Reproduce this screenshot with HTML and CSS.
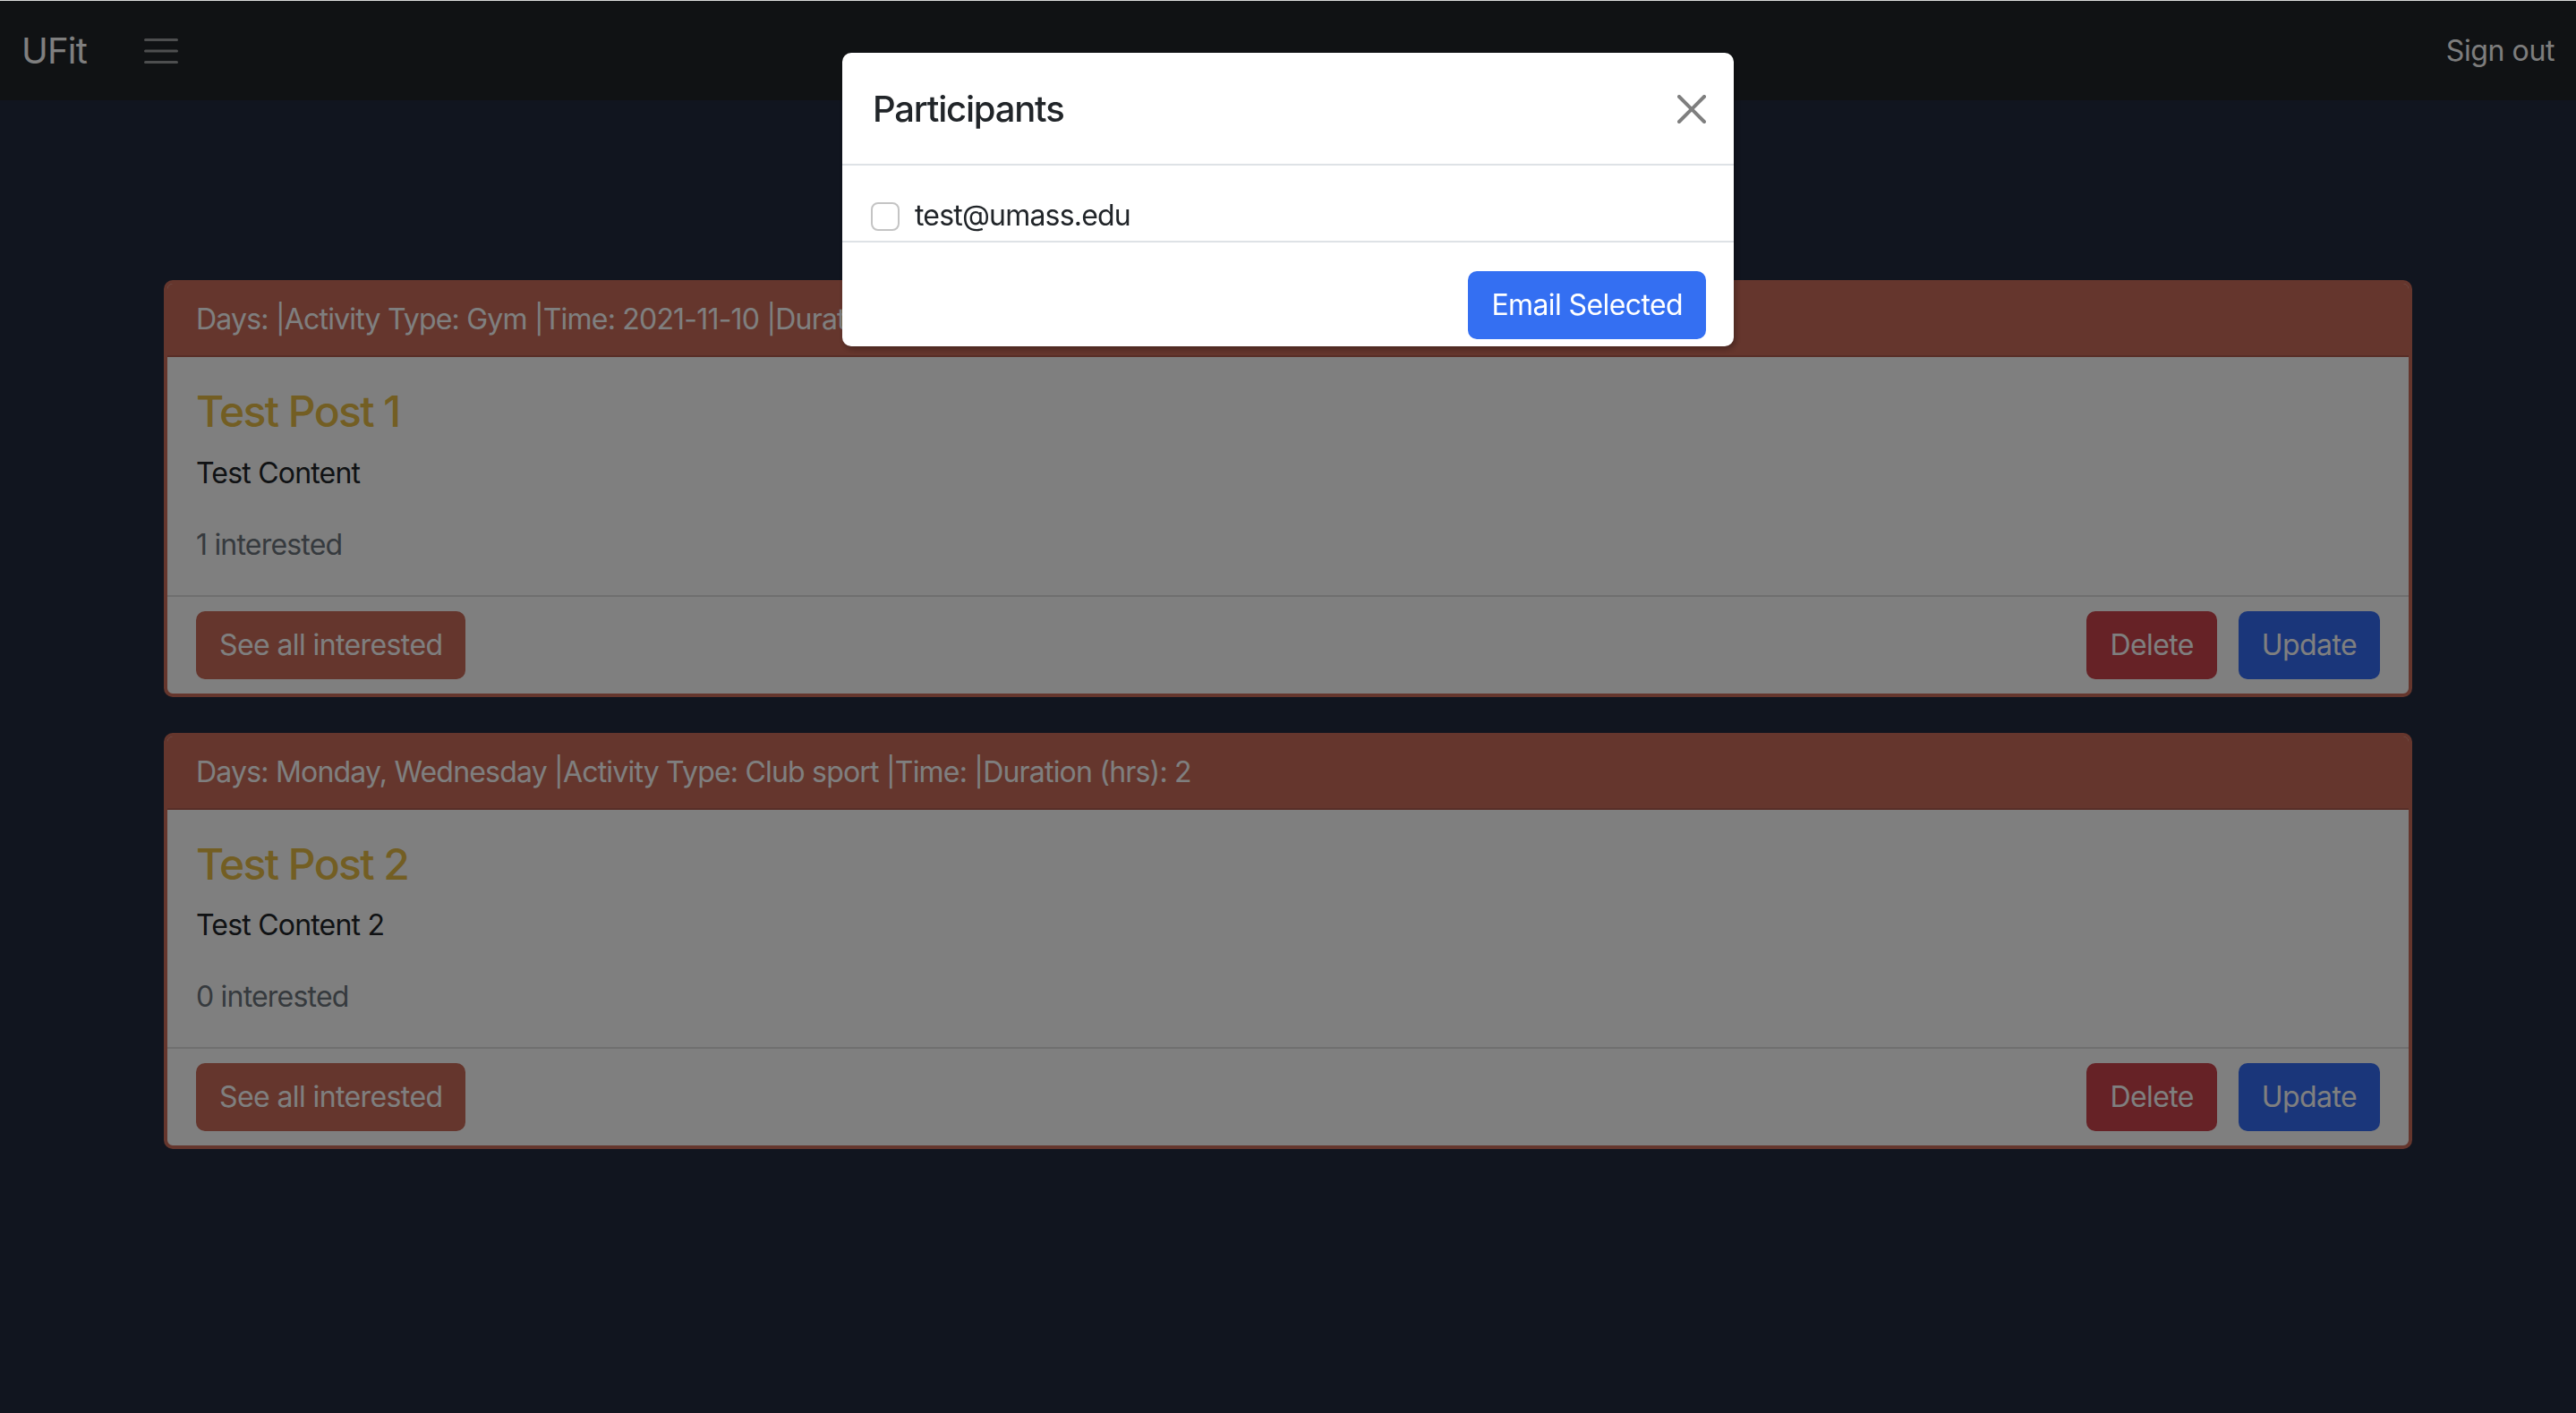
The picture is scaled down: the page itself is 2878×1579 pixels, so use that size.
FILE: index.html
```html
<!DOCTYPE html>
<html lang="en">
<head>
<meta charset="utf-8">
<title>UFit</title>
<link rel="stylesheet" href="styles.css">
</head>
<body>
<nav class="navbar">
  <a class="brand">UFit</a>
  <button class="toggler" aria-label="Toggle navigation">
    <svg width="38" height="28" viewBox="0 0 38 28"><path d="M1.5 1.5h35M1.5 14h35M1.5 26.5h35" stroke="#9a9c9e" stroke-width="3" stroke-linecap="round" fill="none"/></svg>
  </button>
  <a class="signout">Sign out</a>
</nav>

<main class="container">
  <section class="card">
    <div class="card-header">Days: |Activity Type: Gym |Time: 2021-11-10 |Duration (hrs): 1</div>
    <div class="card-body">
      <h4 class="card-title">Test Post 1</h4>
      <p class="card-text">Test Content</p>
      <p class="card-muted">1 interested</p>
    </div>
    <div class="card-footer">
      <button class="btn btn-brown">See all interested</button>
      <div class="btn-group">
        <button class="btn btn-danger">Delete</button>
        <button class="btn btn-primary">Update</button>
      </div>
    </div>
  </section>

  <section class="card">
    <div class="card-header">Days: Monday, Wednesday |Activity Type: Club sport |Time: |Duration (hrs): 2</div>
    <div class="card-body">
      <h4 class="card-title">Test Post 2</h4>
      <p class="card-text">Test Content 2</p>
      <p class="card-muted">0 interested</p>
    </div>
    <div class="card-footer">
      <button class="btn btn-brown">See all interested</button>
      <div class="btn-group">
        <button class="btn btn-danger">Delete</button>
        <button class="btn btn-primary">Update</button>
      </div>
    </div>
  </section>
</main>

<div class="backdrop"></div>

<div class="modal">
  <div class="modal-dialog">
    <div class="modal-header">
      <h5 class="modal-title">Participants</h5>
      <button class="btn-close" aria-label="Close">
        <svg width="32" height="32" viewBox="0 0 16 16"><path fill="#000" fill-opacity="0.5" d="M.293.293a1 1 0 0 1 1.414 0L8 6.586 14.293.293a1 1 0 1 1 1.414 1.414L9.414 8l6.293 6.293a1 1 0 0 1-1.414 1.414L8 9.414l-6.293 6.293a1 1 0 0 1-1.414-1.414L6.586 8 .293 1.707a1 1 0 0 1 0-1.414z"/></svg>
      </button>
    </div>
    <div class="modal-body">
      <label class="check-row">
        <input type="checkbox" class="check">
        <span>test@umass.edu</span>
      </label>
    </div>
    <div class="modal-footer">
      <button class="btn btn-email">Email Selected</button>
    </div>
  </div>
</div>
</body>
</html>
```

FILE: styles.css
```css
* { box-sizing: border-box; }

html, body {
  margin: 0;
  padding: 0;
}

body {
  background: #222a3e;
  font-family: "Inter", "Noto Sans", "DejaVu Sans", sans-serif;
  font-size: 32px;
  line-height: 48px;
  letter-spacing: -0.8px;
  color: #212529;
  min-height: 1579px;
}

.navbar {
  height: 112px;
  background: #212529;
  display: flex;
  align-items: center;
  padding: 2px 24px 0;
}

.brand {
  font-size: 40px;
  line-height: 60px;
  color: #ffffff;
  letter-spacing: -0.8px;
}

.toggler {
  margin-left: 64px;
  padding: 0;
  border: 0;
  background: none;
  display: flex;
  align-items: center;
}

.signout {
  margin-left: auto;
  color: #fbfbfb;
  font-size: 32px;
  line-height: 48px;
  letter-spacing: -0.4px;
}

.container {
  width: 2512px;
  margin: 201px auto 0;
}

.card {
  border: 4px solid #ca6c5a;
  border-radius: 10px;
  background: #ffffff;
  overflow: hidden;
  margin-bottom: 40px;
}

.card-header {
  background: #ca6c5a;
  color: #ffffff;
  padding: 16px 32px;
  border-bottom: 2px solid #b15d4e;
  white-space: nowrap;
}

.card-body {
  padding: 32px;
}

.card-title {
  margin: 0 0 16px;
  font-size: 48px;
  line-height: 57.6px;
  font-weight: 500;
  letter-spacing: -1.6px;
  color: #e6bc46;
}

.card-text {
  margin: 0 0 32px;
}

.card-muted {
  margin: 0;
  color: #6c757d;
}

.card-footer {
  border-top: 2px solid #dfdfdf;
  padding: 16px 32px;
  display: flex;
  justify-content: space-between;
  align-items: center;
}

.btn-group {
  display: flex;
  gap: 24px;
}

.btn {
  font-family: inherit;
  font-size: 32px;
  line-height: 48px;
  letter-spacing: -0.6px;
  padding: 12px 24px;
  border: 2px solid transparent;
  border-radius: 10px;
  color: #ffffff;
  cursor: pointer;
}

.btn-brown { background: #ca6c5a; }
.btn-danger { background: #cc444c; }
.btn-primary { background: #346cf4; }
.btn-email { background: #346ff2; }

.backdrop {
  position: fixed;
  inset: 0;
  background: rgba(0, 0, 0, 0.5);
  border-top: 1px solid #d8d8d8;
}

.modal {
  position: fixed;
  inset: 0;
  display: flex;
  justify-content: center;
  align-items: flex-start;
}

.modal-dialog {
  width: 996px;
  margin-top: 59px;
  background: #ffffff;
  border-radius: 10px;
  box-shadow: 2px 3px 6px rgba(0, 0, 0, 0.3);
}

.modal-header {
  display: flex;
  align-items: center;
  justify-content: space-between;
  padding: 33px 31px 31px 34px;
  border-bottom: 2px solid #dee2e6;
}

.modal-title {
  margin: 0;
  font-size: 40px;
  line-height: 60px;
  font-weight: 500;
  letter-spacing: -1.2px;
  color: #212529;
}

.btn-close {
  width: 32px;
  height: 32px;
  padding: 0;
  border: 0;
  background: none;
  display: flex;
}

.modal-body {
  padding: 32px 32px 4px;
}

.check-row {
  display: flex;
  align-items: center;
  gap: 17px;
  color: #212529;
}

.check {
  appearance: none;
  -webkit-appearance: none;
  width: 32px;
  height: 32px;
  margin: 2px 0 0;
  border: 2px solid #c4c4c4;
  border-radius: 8px;
  background: #ffffff;
}

.modal-footer {
  border-top: 2px solid #dee2e6;
  padding: 32px 31px 8px;
  display: flex;
  justify-content: flex-end;
}
```
